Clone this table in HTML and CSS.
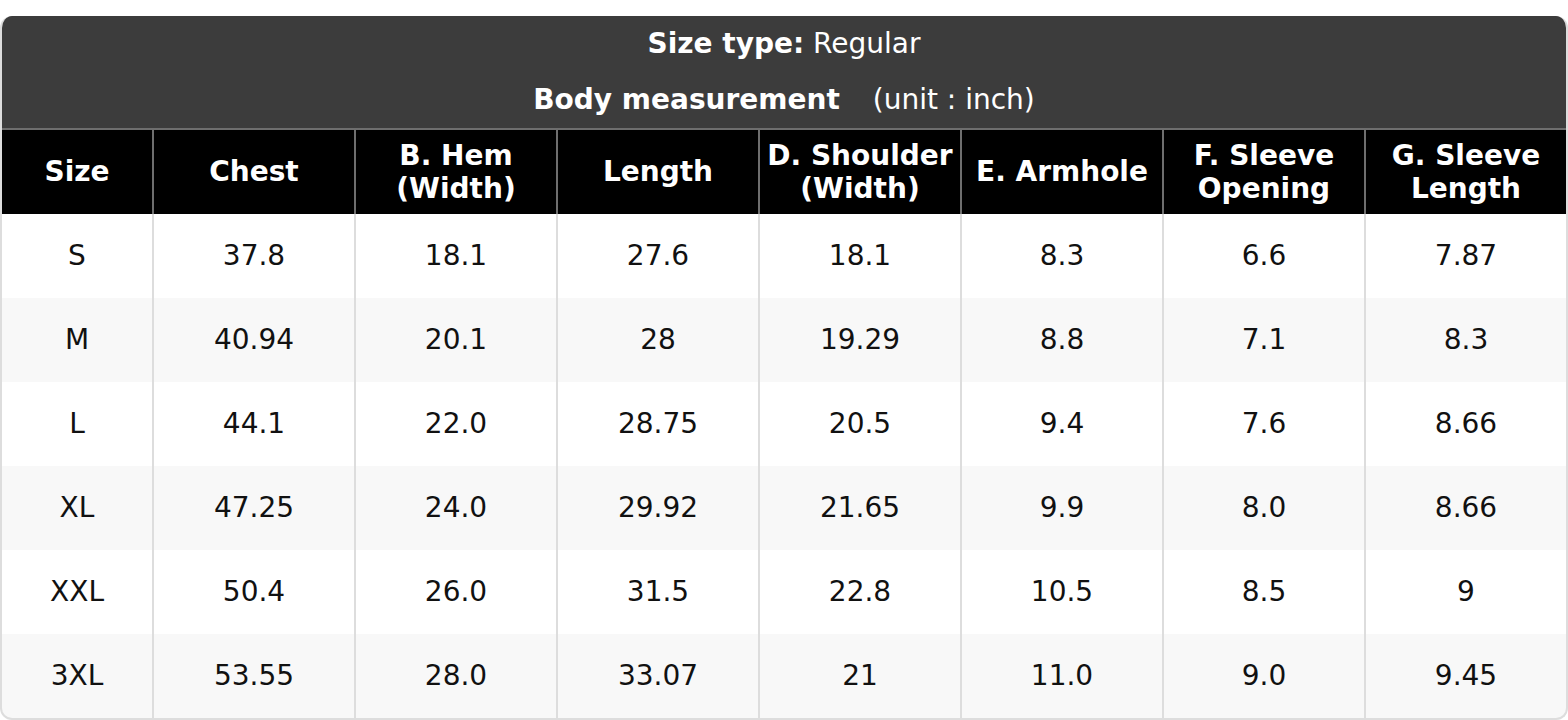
FILE: index.html
```html
<!DOCTYPE html>
<html>
<head>
<meta charset="utf-8">
<link rel="stylesheet" href="styles.css">
</head>
<body>
<div class="card">
  <div class="title">
    <div class="line"><b>Size type:</b> Regular</div>
    <div class="line"><b>Body measurement</b><span class="unit">(unit : inch)</span></div>
  </div>
  <div class="row head">
    <div class="cell">Size</div>
    <div class="cell">Chest</div>
    <div class="cell">B. Hem<br>(Width)</div>
    <div class="cell">Length</div>
    <div class="cell">D. Shoulder<br>(Width)</div>
    <div class="cell">E. Armhole</div>
    <div class="cell">F. Sleeve<br>Opening</div>
    <div class="cell">G. Sleeve<br>Length</div>
  </div>
  <div class="row">
    <div class="cell">S</div><div class="cell">37.8</div><div class="cell">18.1</div><div class="cell">27.6</div><div class="cell">18.1</div><div class="cell">8.3</div><div class="cell">6.6</div><div class="cell">7.87</div>
  </div>
  <div class="row alt">
    <div class="cell">M</div><div class="cell">40.94</div><div class="cell">20.1</div><div class="cell">28</div><div class="cell">19.29</div><div class="cell">8.8</div><div class="cell">7.1</div><div class="cell">8.3</div>
  </div>
  <div class="row">
    <div class="cell">L</div><div class="cell">44.1</div><div class="cell">22.0</div><div class="cell">28.75</div><div class="cell">20.5</div><div class="cell">9.4</div><div class="cell">7.6</div><div class="cell">8.66</div>
  </div>
  <div class="row alt">
    <div class="cell">XL</div><div class="cell">47.25</div><div class="cell">24.0</div><div class="cell">29.92</div><div class="cell">21.65</div><div class="cell">9.9</div><div class="cell">8.0</div><div class="cell">8.66</div>
  </div>
  <div class="row">
    <div class="cell">XXL</div><div class="cell">50.4</div><div class="cell">26.0</div><div class="cell">31.5</div><div class="cell">22.8</div><div class="cell">10.5</div><div class="cell">8.5</div><div class="cell">9</div>
  </div>
  <div class="row alt">
    <div class="cell">3XL</div><div class="cell">53.55</div><div class="cell">28.0</div><div class="cell">33.07</div><div class="cell">21</div><div class="cell">11.0</div><div class="cell">9.0</div><div class="cell">9.45</div>
  </div>
</div>
</body>
</html>
```
FILE: styles.css
```css
html, body {
  margin: 0;
  padding: 0;
  background: #ffffff;
}
body {
  font-family: "DejaVu Sans", "Liberation Sans", sans-serif;
  font-size: 28px;
  color: #111111;
  padding-top: 16px;
}
.card {
  width: 1568px;
  box-sizing: border-box;
  border: 2px solid #dddddd;
  border-top: none;
  border-radius: 12px;
  overflow: hidden;
  background: #dddddd;
}
.title {
  background: #3c3c3c;
  color: #ffffff;
  text-align: center;
  margin: 0 -2px;
  border-bottom: 2px solid #6e6e6e;
}
.line {
  height: 56px;
  line-height: 56px;
}
.unit {
  margin-left: 33px;
}
.row {
  display: grid;
  grid-template-columns: 150px repeat(7, 1fr);
  column-gap: 2px;
  background: #dddddd;
}
.cell {
  background: #ffffff;
  height: 84px;
  display: flex;
  align-items: center;
  justify-content: center;
  text-align: center;
  line-height: 33px;
  padding-bottom: 1px;
  box-sizing: border-box;
}
.row.alt .cell {
  background: #f8f8f8;
}
.row.head {
  background: #6e6e6e;
  margin: 0 -2px;
  padding: 0 2px;
}
.row.head .cell {
  background: #000000;
  color: #ffffff;
  font-weight: bold;
}
```
